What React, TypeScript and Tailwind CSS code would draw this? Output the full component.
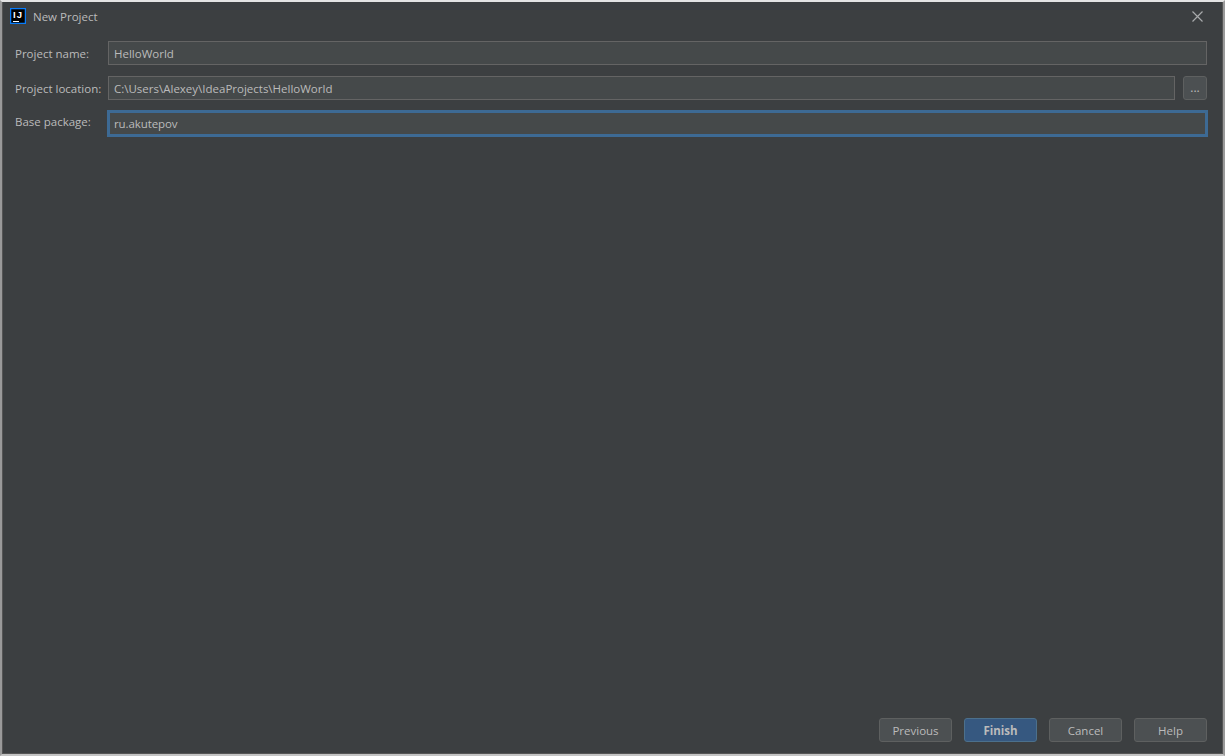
const font = 'font-["Open_Sans","Noto_Sans",sans-serif]';

function Field({ label, value, focused }: { label: string; value: string; focused?: boolean }) {
  return (
    <div className={focused ? 'flex items-center h-[27px] -mt-[1px]' : 'flex items-center h-[24px]'}>
      <label
        className={
          focused
            ? 'w-[93px] shrink-0 text-[11.5px] text-[#bbbbbb] leading-none pb-[3px]'
            : 'w-[93px] shrink-0 text-[11.5px] text-[#bbbbbb] leading-none pt-[1px]'
        }
      >
        {label}
      </label>
      <div
        className={
          focused
            ? 'flex-1 h-[27px] -mx-[1px] flex items-center pl-[4px] bg-[#45494a] border-[3px] border-[#3d6a94] text-[11.5px] tracking-[-0.1px] text-[#bbbbbb]'
            : 'flex-1 h-[24px] flex items-center pl-[5px] pt-[1px] bg-[#45494a] border border-[#646464] text-[11.5px] text-[#bbbbbb]'
        }
      >
        {value}
      </div>
    </div>
  );
}

function Button({ children, primary }: { children: string; primary?: boolean }) {
  return (
    <button
      className={
        primary
          ? 'w-[73px] h-[24px] pt-[1px] rounded-[3px] border border-[#4c708c] bg-[#365880] text-[11.5px] font-bold text-[#bbbbbb]'
          : 'w-[73px] h-[24px] pt-[1px] rounded-[3px] border border-[#5e6060] bg-[#4c5052] text-[11.5px] text-[#bbbbbb]'
      }
    >
      {children}
    </button>
  );
}

export default function App() {
  return (
    <div
      className={`w-[1225px] h-[756px] bg-[#ececec] border-t-2 border-t-[#e4e4e4] border-x-2 border-x-[#9a9a9a] border-b-2 border-b-[#c4c4c4] overflow-hidden ${font}`}
    >
      <div className="flex flex-col h-full bg-[#3c3f41] border border-[#555555] border-t-0">
        {/* Title bar */}
        <div className="flex items-center h-[29px] shrink-0 pl-[7px]">
          <svg width="16" height="16" viewBox="0 0 16 16" className="shrink-0 mb-[2px]">
            <rect x="0.6" y="0.6" width="14.8" height="14.8" fill="#000" stroke="#087cfa" strokeWidth="1.3" />
            <text
              x="3"
              y="10"
              fontSize="9.5"
              fontWeight="700"
              letterSpacing="1"
              fill="#fff"
              fontFamily="Liberation Sans, sans-serif"
            >
              IJ
            </text>
            <rect x="3" y="13" width="6" height="1" fill="#fff" />
          </svg>
          <span className="ml-[7px] text-[11.5px] text-[#bbbbbb]">New Project</span>
          <svg width="11" height="11" viewBox="0 0 11 11" className="ml-auto mr-[19px]">
            <path d="M0.5 0.5l10 10M10.5 0.5l-10 10" stroke="#a8aaab" strokeWidth="1.2" fill="none" />
          </svg>
        </div>

        {/* Form */}
        <div className="flex flex-col gap-[11px] pt-[10px] pl-[12px] pr-[15px]">
          <Field label="Project name:" value="HelloWorld" />
          <div className="flex items-center gap-[8px]">
            <div className="flex-1">
              <Field label="Project location:" value="C:\Users\Alexey\IdeaProjects\HelloWorld" />
            </div>
            <button className="w-[24px] h-[24px] rounded-[3px] border border-[#5e6060] bg-[#4c5052] text-[12px] leading-none text-[#bbbbbb]">
              ...
            </button>
          </div>
          <Field label="Base package:" value="ru.akutepov" focused />
        </div>

        {/* Footer */}
        <div className="mt-auto flex justify-end gap-[12px] pr-[15px] pb-[11px]">
          <Button>Previous</Button>
          <Button primary>Finish</Button>
          <Button>Cancel</Button>
          <Button>Help</Button>
        </div>
      </div>
    </div>
  );
}
